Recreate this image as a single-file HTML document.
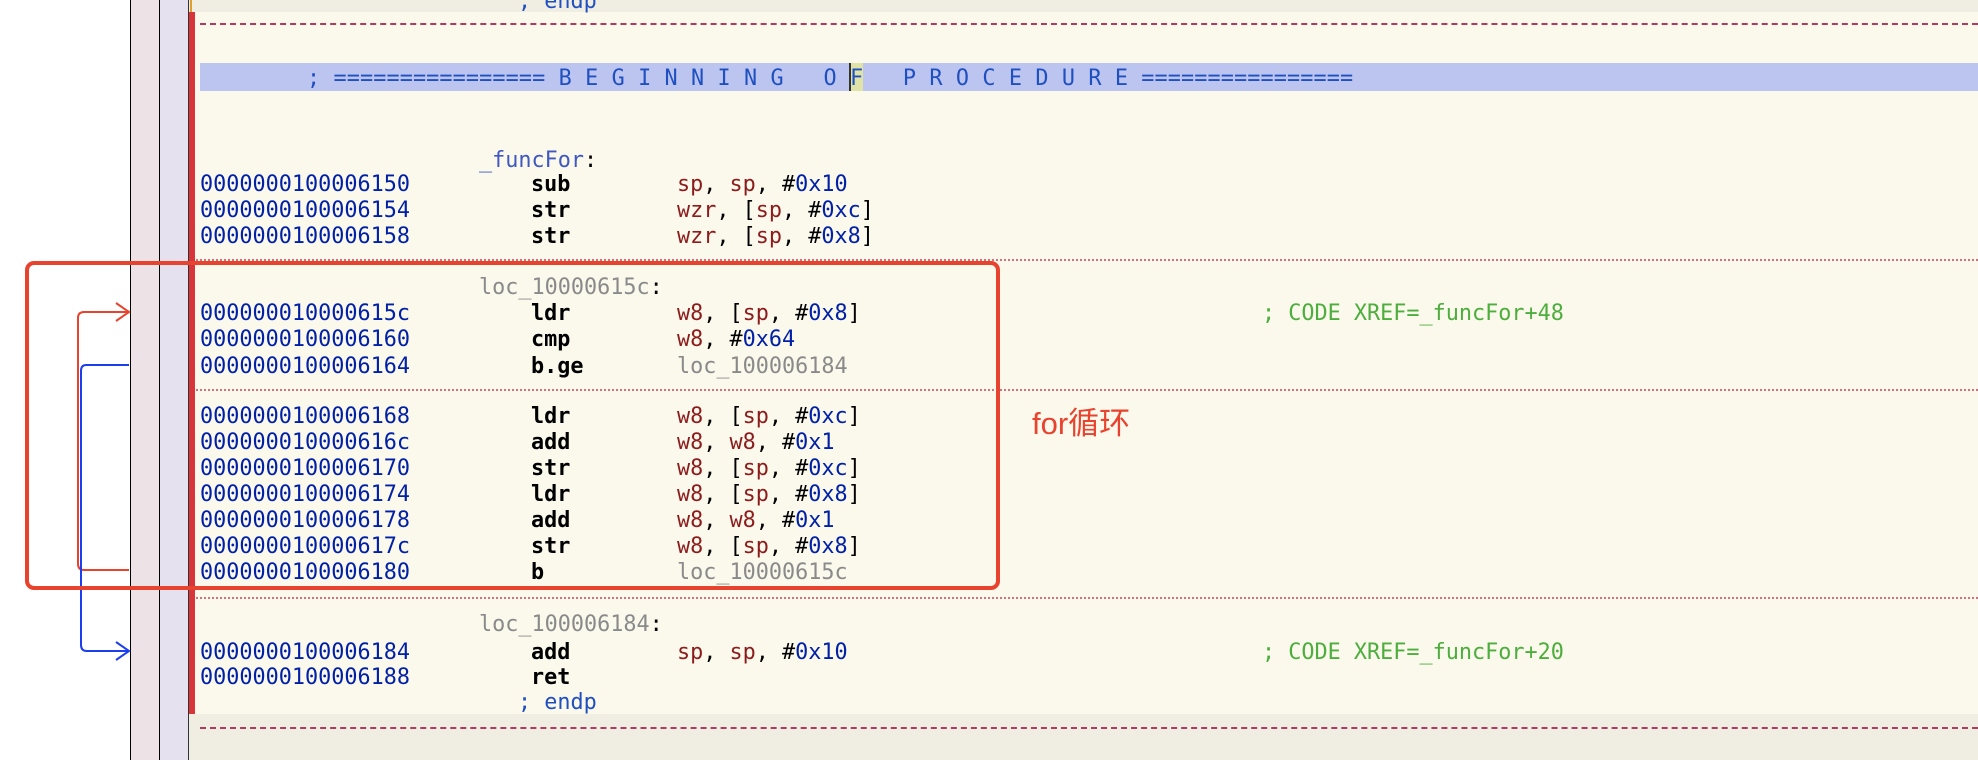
<!DOCTYPE html>
<html><head><meta charset="utf-8"><style>
*{margin:0;padding:0;box-sizing:border-box}
body{width:1978px;height:760px;overflow:hidden;background:#fff;position:relative;font-family:"DejaVu Sans Mono","Liberation Mono",monospace;font-size:21.8px}
.a{position:absolute}
.l{position:absolute;left:200px;height:26px;line-height:26px;white-space:pre;width:1770px;margin-top:2px}
.ad{color:#0020a8;position:absolute;left:0}
.mn{color:#000;font-weight:bold;position:absolute;left:331px}
.op{position:absolute;left:477px;color:#000}
.cm{position:absolute;left:1062px;color:#4cae3c}
.r{color:#8c1c1c}.n{color:#0020a8}.g{color:#8a8a8a}
.dash{position:absolute;left:200px;right:0;height:0;border-top:2px dashed #b03a60}
.dot{position:absolute;left:196px;right:0;height:0;border-top:2px dotted #d07080}
</style></head><body>
<div class="a" style="left:130px;top:0;width:30px;height:760px;background:#ede3e6;border-left:1.5px solid #000;border-right:1.5px solid #000"></div>
<div class="a" style="left:160px;top:0;width:29px;height:760px;background:#e6e1ef;border-right:1.5px solid #333"></div>
<div class="a" style="left:189px;top:0;right:0;height:760px;background:#f0eee3"></div>
<div class="a" style="left:189px;top:12px;right:0;height:702px;background:#fbf8ec"></div>
<div class="a" style="left:189px;top:12px;width:6px;height:702px;background:#d8353a"></div>
<div class="a" style="left:190px;top:0;width:2px;height:12px;background:#e0a030"></div>
<div class="dash" style="top:23px"></div>
<div class="dash" style="top:727px"></div>
<div class="a" style="left:200px;top:63px;right:0;height:28px;background:#bcc4f0"></div>
<div class="a" style="left:850px;top:63px;width:13px;height:28px;background:#dfe3a8"></div>
<div class="a" style="left:849px;top:63px;width:2px;height:28px;background:#333"></div>

<div class="l" style="top:-13px"><span class="n" style="position:absolute;left:318px;color:#2050c0">; endp</span></div>
<div class="l" style="top:64px;color:#2050c0"><span style="position:absolute;left:107px;letter-spacing:0.12px">; ================ B E G I N N I N G   O F   P R O C E D U R E ================</span></div>
<div class="l" style="top:146px"><span style="position:absolute;left:279px"><span style="color:#4058c0">_funcFor</span>:</span></div>
<div class="l" style="top:170px"><span class="ad">0000000100006150</span><span class="mn">sub</span><span class="op"><span class="r">sp</span>, <span class="r">sp</span>, #<span class="n">0x10</span></span></div>
<div class="l" style="top:196px"><span class="ad">0000000100006154</span><span class="mn">str</span><span class="op"><span class="r">wzr</span>, [<span class="r">sp</span>, #<span class="n">0xc</span>]</span></div>
<div class="l" style="top:222px"><span class="ad">0000000100006158</span><span class="mn">str</span><span class="op"><span class="r">wzr</span>, [<span class="r">sp</span>, #<span class="n">0x8</span>]</span></div>
<div class="dot" style="top:259px"></div>
<div class="l" style="top:273px"><span style="position:absolute;left:279px"><span class="g">loc_10000615c</span>:</span></div>
<div class="l" style="top:299px"><span class="ad">000000010000615c</span><span class="mn">ldr</span><span class="op"><span class="r">w8</span>, [<span class="r">sp</span>, #<span class="n">0x8</span>]</span><span class="cm">; CODE XREF=_funcFor+48</span></div>
<div class="l" style="top:325px"><span class="ad">0000000100006160</span><span class="mn">cmp</span><span class="op"><span class="r">w8</span>, #<span class="n">0x64</span></span></div>
<div class="l" style="top:352px"><span class="ad">0000000100006164</span><span class="mn">b.ge</span><span class="op g">loc_100006184</span></div>
<div class="dot" style="top:389px"></div>
<div class="l" style="top:402px"><span class="ad">0000000100006168</span><span class="mn">ldr</span><span class="op"><span class="r">w8</span>, [<span class="r">sp</span>, #<span class="n">0xc</span>]</span></div>
<div class="l" style="top:428px"><span class="ad">000000010000616c</span><span class="mn">add</span><span class="op"><span class="r">w8</span>, <span class="r">w8</span>, #<span class="n">0x1</span></span></div>
<div class="l" style="top:454px"><span class="ad">0000000100006170</span><span class="mn">str</span><span class="op"><span class="r">w8</span>, [<span class="r">sp</span>, #<span class="n">0xc</span>]</span></div>
<div class="l" style="top:480px"><span class="ad">0000000100006174</span><span class="mn">ldr</span><span class="op"><span class="r">w8</span>, [<span class="r">sp</span>, #<span class="n">0x8</span>]</span></div>
<div class="l" style="top:506px"><span class="ad">0000000100006178</span><span class="mn">add</span><span class="op"><span class="r">w8</span>, <span class="r">w8</span>, #<span class="n">0x1</span></span></div>
<div class="l" style="top:532px"><span class="ad">000000010000617c</span><span class="mn">str</span><span class="op"><span class="r">w8</span>, [<span class="r">sp</span>, #<span class="n">0x8</span>]</span></div>
<div class="l" style="top:558px"><span class="ad">0000000100006180</span><span class="mn">b</span><span class="op g">loc_10000615c</span></div>
<div class="dot" style="top:597px"></div>
<div class="l" style="top:610px"><span style="position:absolute;left:279px"><span class="g">loc_100006184</span>:</span></div>
<div class="l" style="top:638px"><span class="ad">0000000100006184</span><span class="mn">add</span><span class="op"><span class="r">sp</span>, <span class="r">sp</span>, #<span class="n">0x10</span></span><span class="cm">; CODE XREF=_funcFor+20</span></div>
<div class="l" style="top:663px"><span class="ad">0000000100006188</span><span class="mn">ret</span></div>
<div class="l" style="top:688px"><span style="position:absolute;left:318px;color:#2050c0">; endp</span></div>

<svg class="a" style="left:0;top:0" width="200" height="760">
<path d="M129 312 H84 Q78 312 78 318 V564 Q78 570 84 570 H129" fill="none" stroke="#e8432e" stroke-width="2"/>
<path d="M116 303 L129 312 L116 321" fill="none" stroke="#e8432e" stroke-width="2"/>
<path d="M129 365 H86 Q81 365 81 371 V645 Q81 651 87 651 H129" fill="none" stroke="#1a3ef0" stroke-width="2"/>
<path d="M116 642 L129 651 L116 660" fill="none" stroke="#1a3ef0" stroke-width="2"/>
</svg>
<div class="a" style="left:25px;top:261px;width:975px;height:329px;border:4px solid #e8432e;border-radius:9px"></div>
<div class="a" style="left:1032px;top:406px;font-family:'Liberation Sans','Noto Sans CJK SC',sans-serif;font-size:31px;color:#e8432e;line-height:36px">for循环</div>
</body></html>
